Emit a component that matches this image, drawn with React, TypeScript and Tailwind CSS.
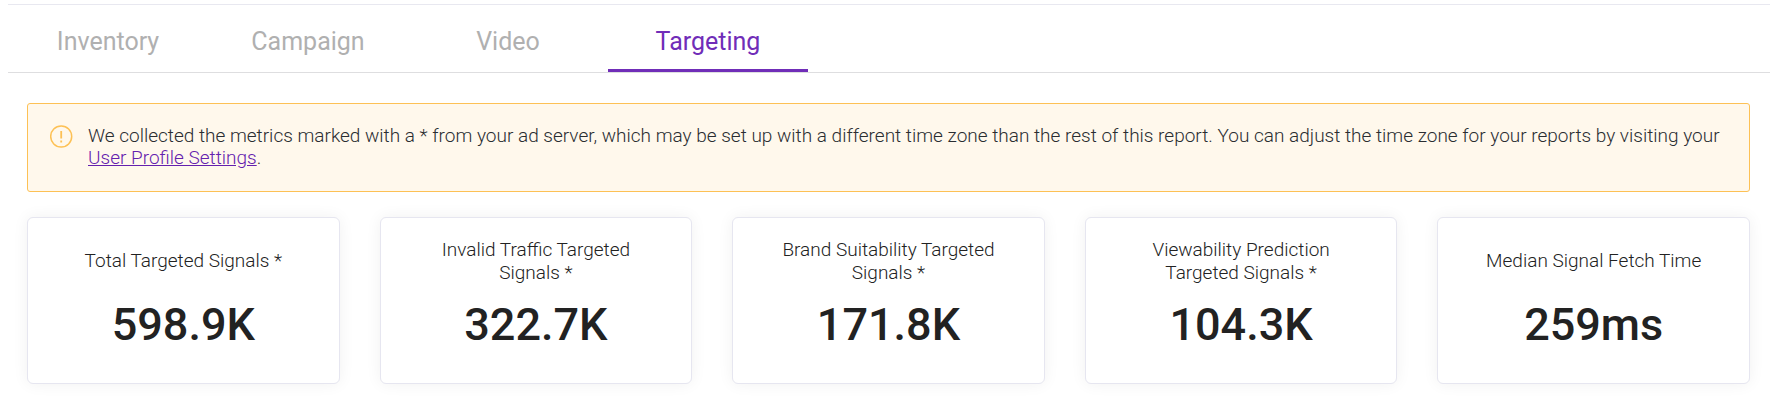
const tabs = ["Inventory", "Campaign", "Video", "Targeting"];

const metrics = [
  { label: "Total Targeted Signals *", value: "598.9K" },
  { label: "Invalid Traffic Targeted Signals *", value: "322.7K" },
  { label: "Brand Suitability Targeted Signals *", value: "171.8K" },
  { label: "Viewability Prediction Targeted Signals *", value: "104.3K" },
  { label: "Median Signal Fetch Time", value: "259ms" },
];

function Tabs() {
  return (
    <nav className="ml-2 flex h-[69px] border-t border-b border-t-[#e8e8f0] border-b-[#dedee0]" role="tablist">
      {tabs.map((tab) => {
        const active = tab === "Targeting";
        return (
          <button
            key={tab}
            type="button"
            role="tab"
            aria-selected={active}
            className={
              active
                ? "w-50 border-b-3 border-[#702db8] pt-2.5 text-[25px] text-[#702db8]"
                : "w-50 border-b-3 border-transparent pt-2.5 text-[25px] text-[#b0b0b0]"
            }
          >
            {tab}
          </button>
        );
      })}
    </nav>
  );
}

function Notice() {
  return (
    <div className="flex gap-[15px] rounded-[3px] border border-[#fdc155] bg-[#fff8ec] pt-[21px] pr-5 pb-[22px] pl-[22px]">
      <svg className="shrink-0" width="23" height="23" viewBox="0 0 23 23" fill="none" stroke="#fdc155">
        <circle cx="11.2" cy="11.5" r="10.5" strokeWidth="1.5" />
        <path d="M11.2 6v7.5M11.2 15.5v2" strokeWidth="1.8" />
      </svg>
      <p className="text-[19px] leading-[22px] font-light text-[#2a2d31]">
        We collected the metrics marked with a * from your ad server, which may be set up with a different time zone
        than the rest of this report. You can adjust the time zone for your reports by visiting your{" "}
        <a href="#settings" className="text-[#6420ae] underline">
          User Profile Settings
        </a>
        .
      </p>
    </div>
  );
}

function MetricCard({ label, value }: { label: string; value: string }) {
  return (
    <article className="flex h-[167px] flex-col items-center rounded-md border border-[#e6e6f0] bg-white px-10 pt-5 text-center text-[#222] shadow-[0_0_16px_rgba(0,0,0,0.06)]">
      <h2 className="flex h-[45px] items-center text-[19px] leading-[23px] font-light">{label}</h2>
      <p className="mt-[13px] text-[45px] leading-[57px] font-medium">{value}</p>
    </article>
  );
}

export default function App() {
  return (
    <main className="bg-white pt-1 pb-6 font-[Roboto,sans-serif]">
      <Tabs />
      <div className="pt-[30px] pr-5 pl-[27px]">
        <Notice />
        <section className="mt-[25px] grid grid-cols-5 gap-10">
          {metrics.map((metric) => (
            <MetricCard key={metric.label} label={metric.label} value={metric.value} />
          ))}
        </section>
      </div>
    </main>
  );
}
